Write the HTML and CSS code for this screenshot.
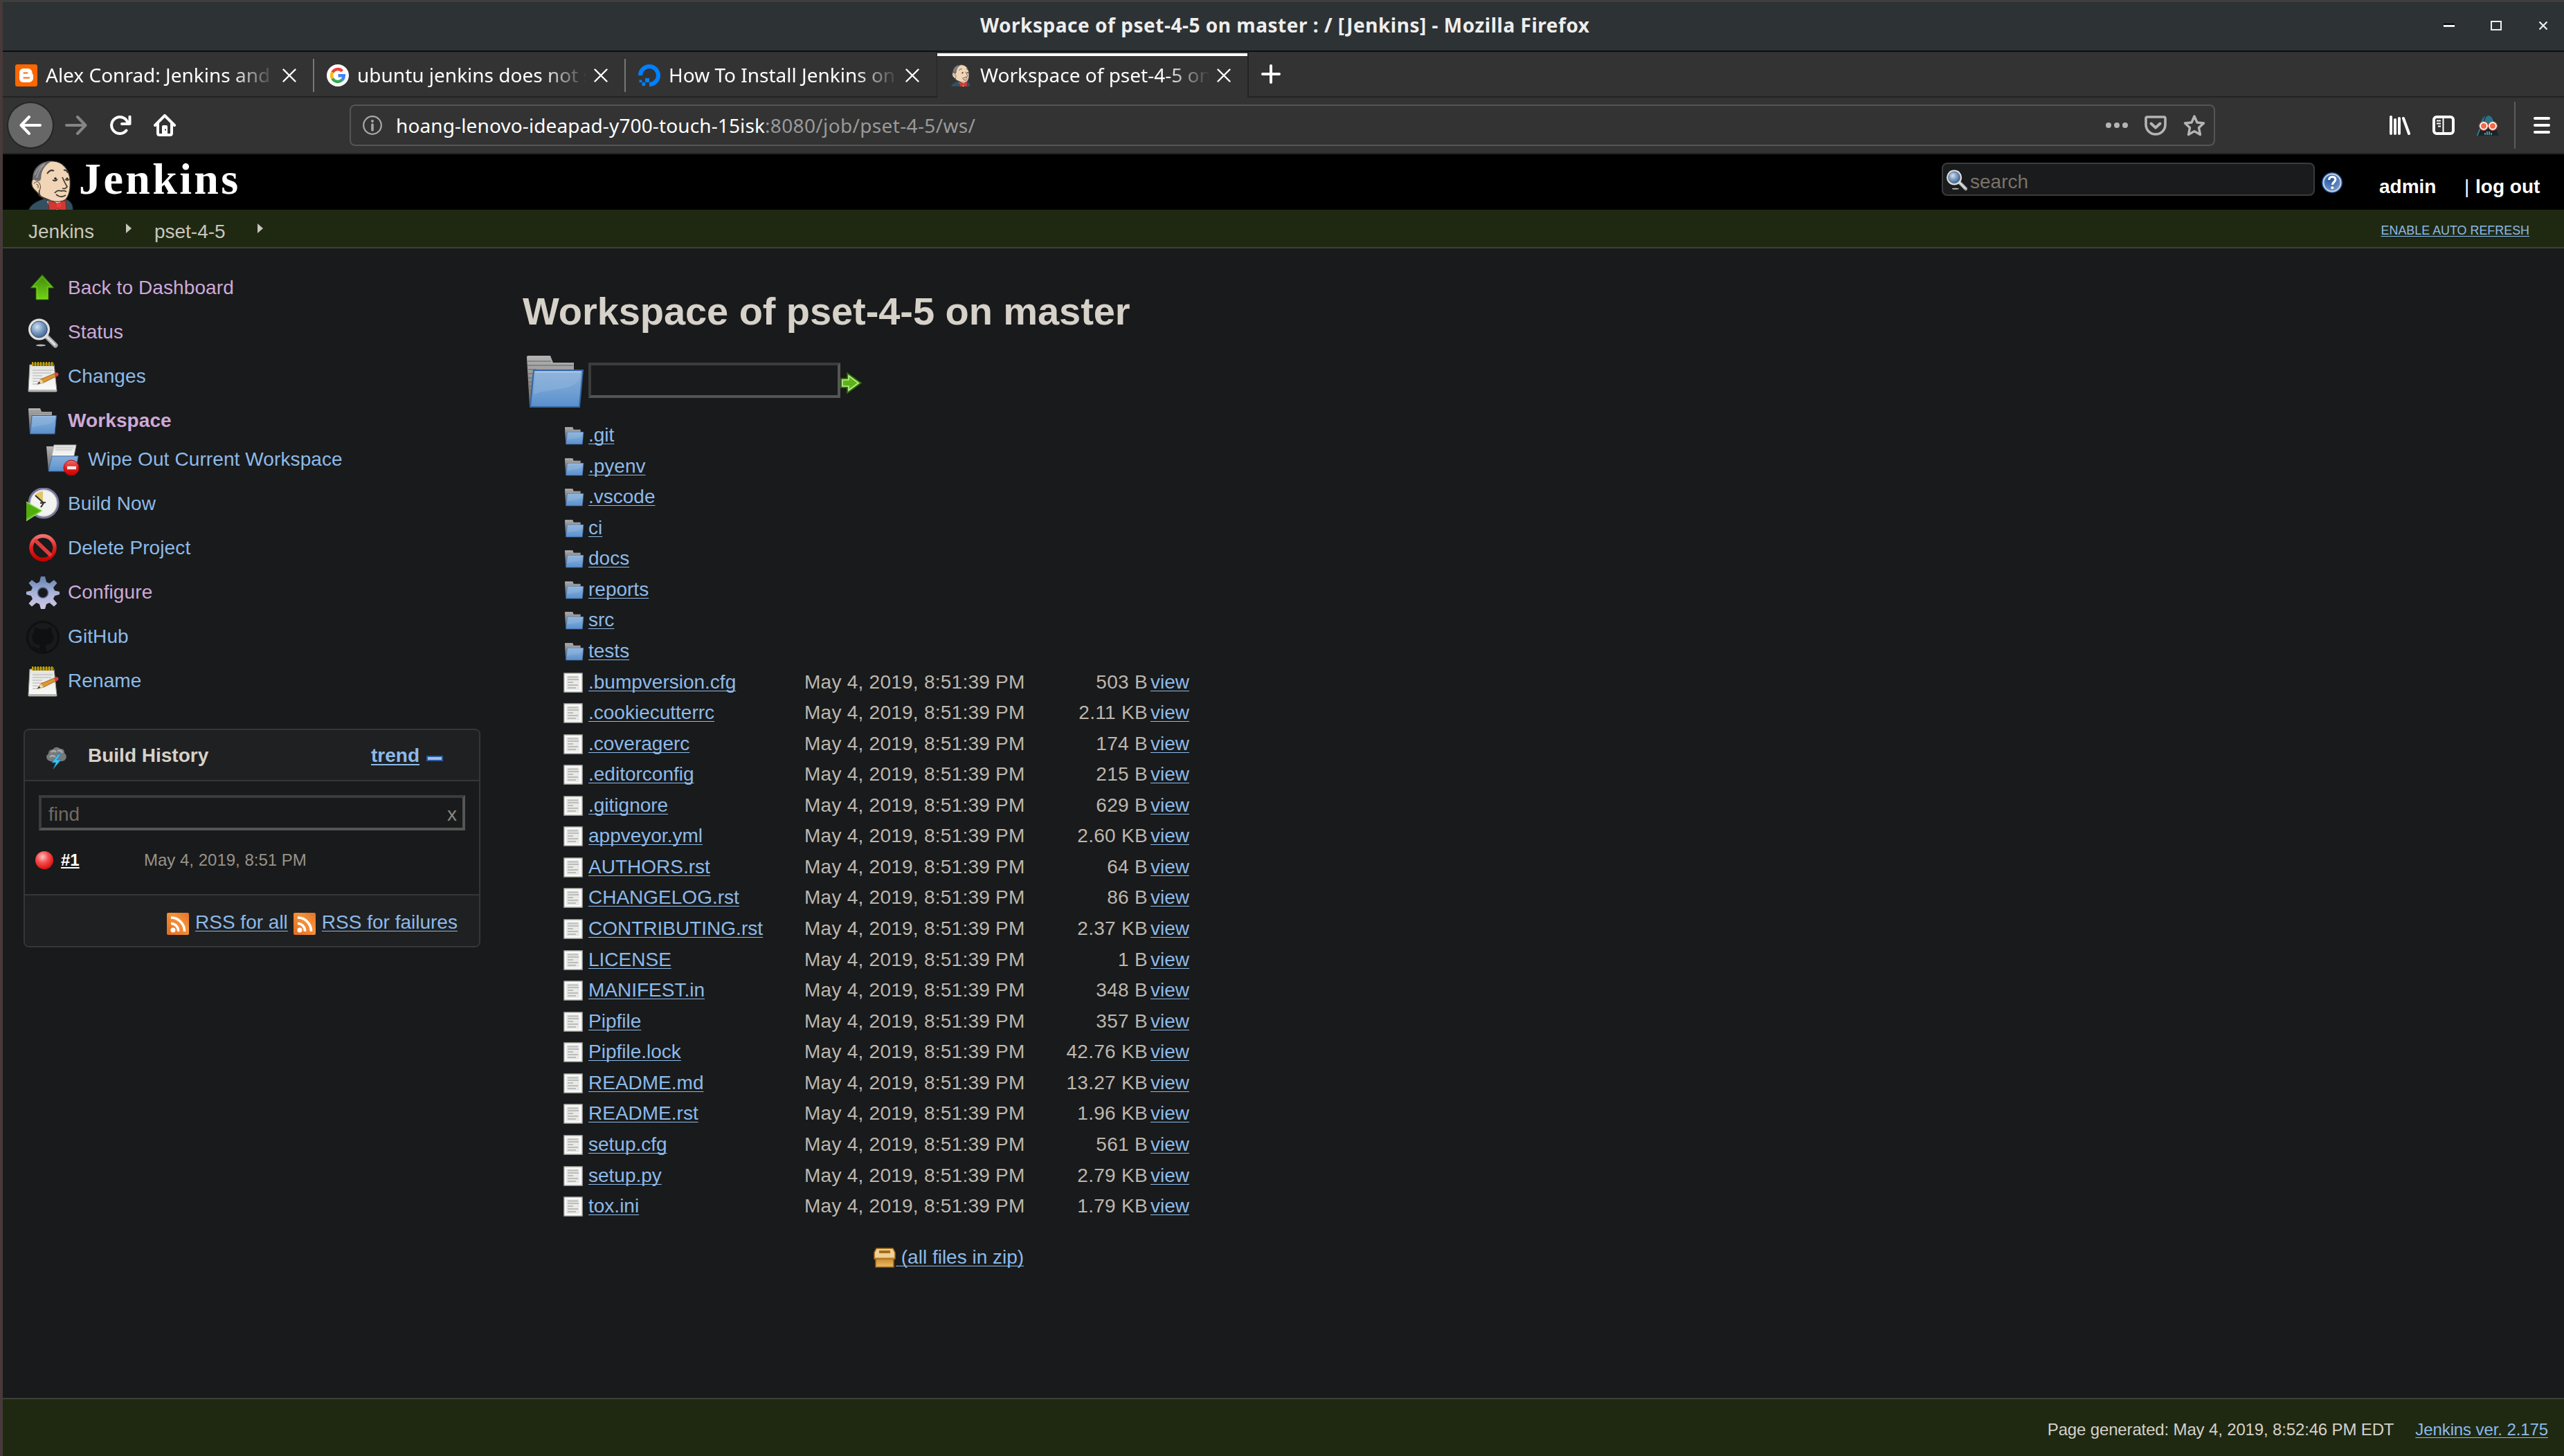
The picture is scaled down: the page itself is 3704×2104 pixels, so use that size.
FILE: index.html
```html
<!DOCTYPE html>
<html lang="en">
<head>
<meta charset="utf-8">
<title>Workspace of pset-4-5 on master : / [Jenkins]</title>
<link rel="stylesheet" href="styles.css">
</head>
<body>
<svg class="defs" width="0" height="0" aria-hidden="true">
  <defs>
    <linearGradient id="gBlue" x1="0" y1="0" x2="0" y2="1"><stop offset="0" stop-color="#88aed8"/><stop offset=".6" stop-color="#6f9fd3"/><stop offset="1" stop-color="#5a8fcc"/></linearGradient>
    <linearGradient id="gGray" x1="0" y1="0" x2="0" y2="1"><stop offset="0" stop-color="#b4b4b4"/><stop offset="1" stop-color="#666"/></linearGradient>
    <linearGradient id="gGreen" x1="0" y1="0" x2="0" y2="1"><stop offset="0" stop-color="#3f8a0c"/><stop offset="1" stop-color="#73d216"/></linearGradient>
    <linearGradient id="gRed" x1="0" y1="0" x2="0" y2="1"><stop offset="0" stop-color="#f07070"/><stop offset=".5" stop-color="#e02020"/><stop offset="1" stop-color="#c80000"/></linearGradient>
    <linearGradient id="gGear" x1="0" y1="0" x2="0" y2="1"><stop offset="0" stop-color="#5f7fb0"/><stop offset=".5" stop-color="#a9b3d8"/><stop offset="1" stop-color="#cfc6e4"/></linearGradient>
    <linearGradient id="gRss" x1="0" y1="1" x2="1" y2="0"><stop offset="0" stop-color="#e06a20"/><stop offset=".6" stop-color="#f59338"/><stop offset="1" stop-color="#e2702a"/></linearGradient>
    <linearGradient id="gBox" x1="0" y1="0" x2="0" y2="1"><stop offset="0" stop-color="#c98b2e"/><stop offset="1" stop-color="#edbd6c"/></linearGradient>
    <linearGradient id="gPaper" x1="0" y1="0" x2="0" y2="1"><stop offset="0" stop-color="#e2e2e0"/><stop offset="1" stop-color="#fbfbfb"/></linearGradient>
    <radialGradient id="gBall" cx=".4" cy=".32" r=".65"><stop offset="0" stop-color="#ffc4c4"/><stop offset=".5" stop-color="#f45050"/><stop offset="1" stop-color="#e01515"/></radialGradient>
    <radialGradient id="gLens" cx=".38" cy=".35" r=".7"><stop offset="0" stop-color="#d5e2f0"/><stop offset=".5" stop-color="#7c9dc4"/><stop offset="1" stop-color="#3d5f8d"/></radialGradient>
    <radialGradient id="gHelp" cx=".4" cy=".3" r=".8"><stop offset="0" stop-color="#23579c"/><stop offset="1" stop-color="#7f9fcb"/></radialGradient>

    <symbol id="folder" viewBox="0 0 48 48">
      <path d="M3 6q0-1 1-1h16l2 5h15v6H10L6 42q-1 0-1-1z" fill="url(#gGray)"/>
      <path d="M3.500 9h17M3.500 12h33M4 15h6M4 18h5M4 21h5M4 24h4M4 27h4M5 30h3M5 33h3M5 36h2" stroke="#6d6d6d" stroke-width="1" opacity=".6"/>
      <path d="M8 15.500h35.500L41 42H5.500z" fill="url(#gBlue)" stroke="#3465a4" stroke-width="1"/>
      <path d="M9 16.800h33L41.500 20C40 28 28 29 20 30q-8 1-12 3z" fill="#a4c4e6" opacity=".28"/>
      <path d="M9 16.800h33" stroke="#a9c7e8" stroke-width="1"/>
    </symbol>
    <symbol id="file" viewBox="0 0 32 32">
      <rect x="0" y="1" width="28" height="29" rx="1" fill="#8e8e8a"/>
      <rect x="1.500" y="2.500" width="25" height="26" fill="#fbfbfb"/>
      <rect x="4" y="5" width="19" height="21" fill="#e9e9e8"/>
      <path d="M6 7.500h15M6 11h16M6 15h8M6 19h15M6 23h12" stroke="#bcbcba" stroke-width="2"/>
    </symbol>
    <symbol id="notepad" viewBox="0 0 48 48">
      <path d="M5 6h35l4 38q0 1-1 1H4q-1 0-1-1z" fill="url(#gPaper)" stroke="#9a9a96" stroke-width="1"/>
      <path d="M3.500 42h40.500v3H3.500z" fill="#b5b5b2"/>
      <path d="M8 3h32v5H8z" fill="#6e6212"/>
      <path d="M9 2v6M13 2v6M17 2v6M21 2v6M25 2v6M29 2v6M33 2v6M37 2v6" stroke="#c4a000" stroke-width="2"/>
      <path d="M9 14h29M9 18h27M9 22h14M9 26h18M9 30h8M9 34h10" stroke="#c3c3c1" stroke-width="1.600"/>
      <path d="M16 34l5-7 19-8 3 4-18 9z" fill="#d9973a" stroke="#8f5902" stroke-width=".8"/>
      <path d="M16 34l5-7 4 5z" fill="#ecd9b4"/><path d="M16 34l2.500-3.500 2 2.300z" fill="#333"/>
      <path d="M40 18.500q4-2.500 6 0t-2.500 5z" fill="#e04040"/>
    </symbol>
    <symbol id="magnifier" viewBox="0 0 48 48">
      <ellipse cx="21" cy="42" rx="7" ry="1.500" fill="#ddd" opacity=".8"/>
      <path d="M30 30l12 12" stroke="#a9aaa7" stroke-width="7" stroke-linecap="round"/>
      <path d="M30 30l11 11" stroke="#e4e4e2" stroke-width="2.500" stroke-linecap="round"/>
      <circle cx="18.500" cy="19" r="15.500" fill="#dedfdc"/>
      <circle cx="18.500" cy="19" r="11.800" fill="url(#gLens)" stroke="#3a4f70" stroke-width="1"/>
    </symbol>
    <symbol id="rss" viewBox="0 0 32 32">
      <rect width="32" height="32" rx="2" fill="url(#gRss)"/>
      <circle cx="9" cy="25" r="3.500" fill="#fff"/>
      <path d="M6 15.500a10.500 10.500 0 0 1 10.500 11.500M6 7a19.500 19.500 0 0 1 19.500 20" fill="none" stroke="#fff" stroke-width="3.600"/>
    </symbol>
    <symbol id="butler" viewBox="0 0 66 74">
      <path d="M0 74c3-10 12-14 24-18l28 0c8 3 13 7 12 18z" fill="#335061" stroke="#1d3744" stroke-width="1"/>
      <path d="M27 60l14-3 10 0-1 17H33z" fill="#f4f4f4"/>
      <path d="M16 52C13 44 6 44 5 36s2-7 3-11C10 9 22 1 36 2c14 1 23 12 24 27 1 13-1 22-6 28-5 4-15 4-21 2z" fill="#f0d6b7" stroke="#3f3a36" stroke-width="1.200"/>
      <path d="M6 28C6 12 17 2 33 2 24 8 21 13 19 20c-1 4 0 7-2 10-5 2-8-1-11-2z" fill="#6d6b6d"/>
      <path d="M9 22c3-7 8-13 15-17M12 26c2-8 5-14 11-19" stroke="#969498" stroke-width="2" fill="none"/>
      <path d="M8 34q5-5 8 0t0 10M11 35q4 0 3 6" fill="none" stroke="#6b5544" stroke-width="1.200"/>
      <path d="M27 20q5-7 10-4M51 15q4-1 6 4" fill="none" stroke="#3f3a36" stroke-width="2"/>
      <path d="M35 29q4 3 7-1M53 28q3 3 6 0" fill="none" stroke="#2d2926" stroke-width="1.600"/>
      <circle cx="39" cy="27" r="1.800" fill="#222"/><circle cx="56" cy="27" r="1.600" fill="#222"/>
      <path d="M49 25q3 7 7 14-3 4-7 2M38 48q4-5 9-3 5-1 8 1M40 50q7 6 14 1M16 44q-3 10 13 14" fill="none" stroke="#4a3c33" stroke-width="1.800"/>
      <path d="M29 60q9-1 14 5 5-7 11-6l1 15H44l-2-4-5 4H30z" fill="#d33833" stroke="#81201d" stroke-width="1"/>
      <circle cx="44" cy="65" r="3.500" fill="#ef3d3a"/>
    </symbol>
    <symbol id="close" viewBox="0 0 20 20"><path d="M1.500 1.500l17 17M18.500 1.500l-17 17" stroke="#fff" stroke-width="2.400" stroke-linecap="round"/></symbol>
  </defs>
</svg>

<div class="window">
  <header class="titlebar">
    <span></span>
    <span class="title">Workspace of pset-4-5 on master : / [Jenkins] - Mozilla Firefox</span>
    <span class="controls">
      <svg width="16" height="16"><path d="M0 6h16" stroke="#000" stroke-width="2"/><path d="M0 8.500h16" stroke="#eee" stroke-width="3"/></svg>
      <svg width="16" height="16"><path d="M1 2h14v12H1z" fill="none" stroke="#eee" stroke-width="2"/><path d="M0 1h16v2H0z" fill="#eee"/></svg>
      <svg width="16" height="16"><path d="M2.500 2.500l11 11M13.500 2.500l-11 11" stroke="#eee" stroke-width="2.200"/></svg>
    </span>
  </header>

  <div class="tabs">
    <div class="tab">
      <svg class="fav" viewBox="0 0 32 32"><rect width="32" height="32" rx="3" fill="#ff6600"/><path d="M12 6h6c4 0 6.500 3 6.500 6 0 2 .5 2.500 1.500 2.500v5c0 4-3 6.500-6.500 6.500h-8C8 26 6 23 6 20v-8c0-3.500 2.500-6 6-6z" fill="#fff"/><path d="M12.500 12.500h5M12.500 19.500h7.500" stroke="#ff6600" stroke-width="2.200" stroke-linecap="round"/></svg>
      <span class="label">Alex Conrad: Jenkins and</span><svg class="x"><use href="#close"/></svg>
    </div>
    <div class="tab">
      <svg class="fav" viewBox="0 0 32 32"><circle cx="16" cy="16" r="16" fill="#fff"/><g fill="none" stroke-width="4.400"><path d="M8.300 11.500A9 9 0 0 1 22.500 9.800" stroke="#ea4335"/><path d="M8.300 20.500a9 9 0 0 1 0-9" stroke="#fbbc05"/><path d="M22 22.700a9 9 0 0 1-13.700-2.200" stroke="#34a853"/><path d="M16.500 16.300h8.300a9 9 0 0 1-2.800 6.400" stroke="#4285f4"/></g></svg>
      <span class="label">ubuntu jenkins does not s</span><svg class="x"><use href="#close"/></svg>
    </div>
    <div class="tab last">
      <svg class="fav" viewBox="0 0 32 32"><path d="M3 16A13 13 0 1 1 16 29" fill="none" stroke="#0080ff" stroke-width="6"/><path d="M10 20h6v6h-6zM5.500 26h4.500v5H5.500zM1.500 22.500h4V26h-4z" fill="#0080ff"/></svg>
      <span class="label">How To Install Jenkins on</span><svg class="x"><use href="#close"/></svg>
    </div>
    <div class="tab active">
      <svg class="fav"><use href="#butler"/></svg>
      <span class="label">Workspace of pset-4-5 on</span><svg class="x"><use href="#close"/></svg>
    </div>
    <div class="tabrest"><svg width="28" height="28"><path d="M14 2v24M2 14h24" stroke="#fff" stroke-width="4" stroke-linecap="round"/></svg></div>
  </div>

  <div class="navbar">
    <span class="back"><svg width="32" height="28" viewBox="0 0 32 28"><path d="M30 14H3M14 2L2.500 14 14 26" fill="none" stroke="#fff" stroke-width="4" stroke-linecap="round" stroke-linejoin="round"/></svg></span>
    <svg class="fwd" width="32" height="28" viewBox="0 0 32 28"><path d="M2 14h27M18 2l11.500 12L18 26" fill="none" stroke="#858585" stroke-width="4" stroke-linecap="round" stroke-linejoin="round"/></svg>
    <svg class="reload" width="32" height="28" viewBox="0 0 32 28"><path d="M23.500 21.500A12 12 0 1 1 25 9" fill="none" stroke="#fff" stroke-width="4" stroke-linecap="round"/><path d="M28.500 1.500V12H17" fill="none" stroke="#fff" stroke-width="4" stroke-linecap="round" stroke-linejoin="round"/><path d="M22 12l7-7v7z" fill="#fff"/></svg>
    <svg class="home" width="32" height="32" viewBox="0 0 32 32"><path d="M2 16L16 2l14 14M6 14v13.500q0 2.500 2.500 2.500h15q2.500 0 2.500-2.500V14" fill="none" stroke="#fff" stroke-width="4" stroke-linecap="round" stroke-linejoin="round"/><path d="M12 30V18q0-2 2-2h4q2 0 2 2v12z" fill="#fff"/><path d="M16 21.500h2v2h-2z" fill="#333"/></svg>
    <div class="urlbar">
      <svg width="28" height="28" viewBox="0 0 28 28"><circle cx="14" cy="14" r="12.800" fill="none" stroke="#a8a8a8" stroke-width="2.200"/><circle cx="14" cy="8" r="2" fill="#a8a8a8"/><path d="M14 13v8" stroke="#a8a8a8" stroke-width="3.600" stroke-linecap="round"/></svg>
      <span class="url"><span class="host">hoang-lenovo-ideapad-y700-touch-15isk</span><span class="path">:8080/job/pset-4-5/ws/</span></span>
      <svg width="32" height="32" viewBox="0 0 32 32"><g fill="#b4b4b4"><circle cx="4" cy="16" r="4"/><circle cx="16" cy="16" r="4"/><circle cx="28" cy="16" r="4"/></g></svg>
      <svg class="pocket" width="32" height="32" viewBox="0 0 32 32"><path d="M4 4h24q2 0 2 2v9a14 14 0 0 1-28 0V6q0-2 2-2z" fill="none" stroke="#b4b4b4" stroke-width="3.600"/><path d="M9.500 13.500l6.500 6 6.500-6" fill="none" stroke="#b4b4b4" stroke-width="4" stroke-linecap="round" stroke-linejoin="round"/></svg>
      <svg width="32" height="32" viewBox="0 0 32 32"><path d="M16 3l4 9 9.500 1-7 6.600 2 9.900L16 24.600 7.500 29.500l2-9.900-7-6.600 9.500-1z" fill="none" stroke="#b4b4b4" stroke-width="3.400" stroke-linejoin="round"/></svg>
    </div>
    <svg class="lib" width="32" height="28" viewBox="0 0 32 28"><path d="M3 2v24M9 6v20M15 4v22M21 4l8 22" stroke="#fff" stroke-width="4" stroke-linecap="round"/></svg>
    <svg class="side" width="32" height="28" viewBox="0 0 32 28"><rect x="2" y="2" width="28" height="24" rx="4" fill="none" stroke="#fff" stroke-width="4"/><path d="M15.500 2v24" stroke="#fff" stroke-width="2"/><path d="M6 7.500h6M6 11.500h6M8 15.500h4" stroke="#fff" stroke-width="2"/></svg>
    <svg class="ext" width="32" height="30" viewBox="0 0 32 30"><path d="M6 20C5 6 12 1 17 1s11 6 10 18l5 11H0z" fill="#14262d"/><path d="M5 18C6 6 10 2 13 1c-3 5-3 10-3 14zM11 13C11 6 13 1 17 1s8 5 8 13z" fill="#2b7384"/><path d="M4 20L0 30h1.500L5 21z" fill="#2f9aaa"/><g fill="#f4694a" stroke="#fff" stroke-width="2"><circle cx="10" cy="16" r="5"/><circle cx="23" cy="16" r="5"/></g><path d="M15 15.500h3" stroke="#fff" stroke-width="2"/><g fill="none" stroke="#d8502f" stroke-width="1"><circle cx="10" cy="16" r="6.500"/><circle cx="23" cy="16" r="6.500"/></g><path d="M12 26v3M15 24v5M18 24v5M21 26v3" stroke="#7fb4be" stroke-width="1.400"/></svg>
    <i class="vsep"></i>
    <svg width="24" height="24" viewBox="0 0 24 24"><path d="M2 2h20M2 12h20M2 22h20" stroke="#fff" stroke-width="4" stroke-linecap="round"/></svg>
  </div>

  <div class="page">
    <div class="header">
      <svg class="logo" width="66" height="72" viewBox="0 0 66 72"><use href="#butler" width="66" height="74"/></svg>
      <span class="brand">Jenkins</span>
      <div class="search"><svg width="34" height="34"><use href="#magnifier"/></svg><span>search</span></div>
      <svg class="help" width="32" height="32" viewBox="0 0 32 32"><circle cx="16" cy="16" r="15" fill="#27569a"/><circle cx="16" cy="16" r="12.500" fill="url(#gHelp)" stroke="#c9d6ea" stroke-width="2"/><path d="M11.500 12q.5-4.500 4.800-4.500t4.500 4c0 3.500-4.300 3.500-4.300 7.500" fill="none" stroke="#fff" stroke-width="3.200"/><circle cx="16.400" cy="23.300" r="2" fill="#fff"/></svg>
      <span class="user">admin</span>
      <span class="logout"><i>|</i> <b>log out</b></span>
    </div>
    <div class="crumbs">
      <span>Jenkins</span><i class="tri"></i><span>pset-4-5</span><i class="tri"></i>
      <a class="refresh">ENABLE AUTO REFRESH</a>
    </div>

    <div class="body">
      <aside class="side-panel">
        <div class="task v"><svg viewBox="0 0 48 48"><path d="M23 4L40 23h-8v17H14V23H6z" fill="url(#gGreen)" stroke="#2f6a05" stroke-width="1"/><path d="M23 7L36.500 21.500H30.500V38.500H15.500V21.500H9.500z" fill="none" stroke="#8be234" stroke-width="1" opacity=".6"/></svg><span>Back to Dashboard</span></div>
        <div class="task v"><svg><use href="#magnifier"/></svg><span>Status</span></div>
        <div class="task"><svg><use href="#notepad"/></svg><span>Changes</span></div>
        <div class="task v cur"><svg><use href="#folder"/></svg><span>Workspace</span></div>
        <div class="task sub"><svg viewBox="0 0 48 48"><path d="M1 4h12v6L7 40H4z" fill="url(#gGray)"/><path d="M12 2h32l-4 20H8z" fill="url(#gPaper)" stroke="#aaa"/><path d="M14 6h26M14 9h24" stroke="#bbb" stroke-width="1.200"/><path d="M9 18h38L43 40H4z" fill="url(#gBlue)" stroke="#3f6fae"/><circle cx="37" cy="35" r="11" fill="url(#gRed)" stroke="#b00808"/><path d="M31 35h13" stroke="#f4e8e8" stroke-width="4.500"/></svg><span>Wipe Out Current Workspace</span></div>
        <div class="task"><svg viewBox="0 0 48 48"><circle cx="25" cy="22" r="21" fill="#f2f2ee" stroke="#77779a" stroke-width="3"/><circle cx="25" cy="22" r="19" fill="none" stroke="#c9c9dc" stroke-width="1"/><path d="M24 22L12 11q5-6 12-6z" fill="#e0c56a"/><path d="M13 11l12 11-4 6M20 22l8-1" fill="none" stroke="#333" stroke-width="2.200"/><path d="M-2 19v30L23 33z" fill="#62c01c" stroke="#b6e58f" stroke-width="1"/><path d="M0 22v22L19 33z" fill="#4fae0c"/></svg><span>Build Now</span></div>
        <div class="task"><svg viewBox="0 0 48 48"><circle cx="24" cy="22.500" r="17" fill="none" stroke="url(#gRed)" stroke-width="5.500"/><path d="M12 11l24 23" stroke="#e23a3a" stroke-width="5.500"/></svg><span>Delete Project</span></div>
        <div class="task v"><svg viewBox="0 0 48 48"><g fill="url(#gGear)"><path d="M21 0h6l2 8 4.500 2L40 5l4.500 4.500L39 16l2 4.500 7 1.500v4l-7 2-2 4.500 5.500 6.500L40 43.500 33.500 38 29 40l-2 7h-6l-2-7-4.500-2L8 43.500 3.500 39 9 32.500 7 28l-7-2v-4l7-1.500L9 16 3.500 9.500 8 5l6.500 5L19 8z"/></g><circle cx="24" cy="23.500" r="7.500" fill="#191a1b" stroke="#56678e" stroke-width="1.500"/></svg><span>Configure</span></div>
        <div class="task"><svg viewBox="0 0 48 48"><circle cx="24" cy="24" r="22.500" fill="none" stroke="#0f1011" stroke-width="3"/><path d="M12 9l7 3h10l7-3 1 8q4 4 2 11-2 6-11 7l1 11h-10v-4q-8 2-10-6 5 1 6 4h4l1-5Q11 34 9 28q-2-7 2-11z" fill="#0f1011"/></svg><span>GitHub</span></div>
        <div class="task"><svg><use href="#notepad"/></svg><span>Rename</span></div>

        <section class="history">
          <div class="hist-head">
            <svg width="32" height="32" viewBox="0 0 32 32"><path d="M4 20q-6-5 0-10 0-6 6-6 5-6 11-1 6-1 6 6 6 6 0 11-5 2-11 1-7 2-12-1z" fill="#77797b"/><path d="M8 8q4-4 7 0M17 6q5-2 7 3M6 15q4-4 8 0" fill="none" stroke="#a9abad" stroke-width="2.400"/><path d="M18 11l-9 12h6l-4 9 11-13h-6l6-8z" fill="#3fc1ec" stroke="#1f7fae" stroke-width=".8"/></svg>
            <b>Build History</b>
            <a class="trend">trend</a>
            <i class="minus"></i>
          </div>
          <div class="hist-body">
            <div class="find"><span>find</span><span class="clr">x</span></div>
            <div class="build"><svg width="28" height="28" viewBox="0 0 28 28"><circle cx="14" cy="14" r="13" fill="url(#gBall)"/></svg><a>#1</a><span>May 4, 2019, 8:51 PM</span></div>
          </div>
          <div class="hist-foot">
            <svg width="32" height="32"><use href="#rss"/></svg><a>RSS for all</a>
            <svg class="second" width="32" height="32"><use href="#rss"/></svg><a>RSS for failures</a>
          </div>
        </section>
      </aside>

      <main>
        <h1>Workspace of pset-4-5 on master</h1>
        <div class="goto">
          <svg width="96" height="96"><use href="#folder"/></svg>
          <div class="field"></div>
          <svg class="go" width="32" height="32" viewBox="0 0 32 32"><path d="M1 9h9V1l20 14.500L10 30v-8H1z" fill="#5cb515" stroke="#2f6a05" stroke-width="1.600"/><path d="M3 11h9V5l14 10.500L12 26v-6H3z" fill="none" stroke="#bfe8a0" stroke-width="1.600"/></svg>
        </div>
        <div class="files">
          <div class="row"><svg><use href="#folder"/></svg><span><a>.git</a></span></div>
          <div class="row"><svg><use href="#folder"/></svg><span><a>.pyenv</a></span></div>
          <div class="row"><svg><use href="#folder"/></svg><span><a>.vscode</a></span></div>
          <div class="row"><svg><use href="#folder"/></svg><span><a>ci</a></span></div>
          <div class="row"><svg><use href="#folder"/></svg><span><a>docs</a></span></div>
          <div class="row"><svg><use href="#folder"/></svg><span><a>reports</a></span></div>
          <div class="row"><svg><use href="#folder"/></svg><span><a>src</a></span></div>
          <div class="row"><svg><use href="#folder"/></svg><span><a>tests</a></span></div>
          <div class="row"><svg><use href="#file"/></svg><span><a>.bumpversion.cfg</a></span><time>May 4, 2019, 8:51:39 PM</time><em>503 B</em><a>view</a></div>
          <div class="row"><svg><use href="#file"/></svg><span><a>.cookiecutterrc</a></span><time>May 4, 2019, 8:51:39 PM</time><em>2.11 KB</em><a>view</a></div>
          <div class="row"><svg><use href="#file"/></svg><span><a>.coveragerc</a></span><time>May 4, 2019, 8:51:39 PM</time><em>174 B</em><a>view</a></div>
          <div class="row"><svg><use href="#file"/></svg><span><a>.editorconfig</a></span><time>May 4, 2019, 8:51:39 PM</time><em>215 B</em><a>view</a></div>
          <div class="row"><svg><use href="#file"/></svg><span><a>.gitignore</a></span><time>May 4, 2019, 8:51:39 PM</time><em>629 B</em><a>view</a></div>
          <div class="row"><svg><use href="#file"/></svg><span><a>appveyor.yml</a></span><time>May 4, 2019, 8:51:39 PM</time><em>2.60 KB</em><a>view</a></div>
          <div class="row"><svg><use href="#file"/></svg><span><a>AUTHORS.rst</a></span><time>May 4, 2019, 8:51:39 PM</time><em>64 B</em><a>view</a></div>
          <div class="row"><svg><use href="#file"/></svg><span><a>CHANGELOG.rst</a></span><time>May 4, 2019, 8:51:39 PM</time><em>86 B</em><a>view</a></div>
          <div class="row"><svg><use href="#file"/></svg><span><a>CONTRIBUTING.rst</a></span><time>May 4, 2019, 8:51:39 PM</time><em>2.37 KB</em><a>view</a></div>
          <div class="row"><svg><use href="#file"/></svg><span><a>LICENSE</a></span><time>May 4, 2019, 8:51:39 PM</time><em>1 B</em><a>view</a></div>
          <div class="row"><svg><use href="#file"/></svg><span><a>MANIFEST.in</a></span><time>May 4, 2019, 8:51:39 PM</time><em>348 B</em><a>view</a></div>
          <div class="row"><svg><use href="#file"/></svg><span><a>Pipfile</a></span><time>May 4, 2019, 8:51:39 PM</time><em>357 B</em><a>view</a></div>
          <div class="row"><svg><use href="#file"/></svg><span><a>Pipfile.lock</a></span><time>May 4, 2019, 8:51:39 PM</time><em>42.76 KB</em><a>view</a></div>
          <div class="row"><svg><use href="#file"/></svg><span><a>README.md</a></span><time>May 4, 2019, 8:51:39 PM</time><em>13.27 KB</em><a>view</a></div>
          <div class="row"><svg><use href="#file"/></svg><span><a>README.rst</a></span><time>May 4, 2019, 8:51:39 PM</time><em>1.96 KB</em><a>view</a></div>
          <div class="row"><svg><use href="#file"/></svg><span><a>setup.cfg</a></span><time>May 4, 2019, 8:51:39 PM</time><em>561 B</em><a>view</a></div>
          <div class="row"><svg><use href="#file"/></svg><span><a>setup.py</a></span><time>May 4, 2019, 8:51:39 PM</time><em>2.79 KB</em><a>view</a></div>
          <div class="row"><svg><use href="#file"/></svg><span><a>tox.ini</a></span><time>May 4, 2019, 8:51:39 PM</time><em>1.79 KB</em><a>view</a></div>
        </div>
        <div class="zip"><svg width="32" height="32" viewBox="0 0 32 32"><path d="M4 2h24l3 6v9H1V8z" fill="#f0cf98" stroke="#9a6412" stroke-width="1.600"/><path d="M8 5h16v4H8z" fill="#a56f14"/><path d="M3 17h26v12H3z" fill="url(#gBox)" stroke="#9a6412" stroke-width="1.600"/><path d="M1 16.500h30" stroke="#b77b1e" stroke-width="2"/></svg><a>&nbsp;(all files in zip)</a></div>
      </main>
    </div>

    <footer><span>Page generated: May 4, 2019, 8:52:46 PM EDT</span><a>Jenkins ver. 2.175</a></footer>
  </div>
</div>
</body>
</html>
```
FILE: styles.css
```css
* { box-sizing: border-box; }
html, body { margin: 0; height: 2104px; background: #191a1b; }
body { font-family: "Liberation Sans", Arial, sans-serif; font-size: 28px; color: #bdb7ae; overflow: hidden; }
svg { display: block; flex: none; }
i, em { font-style: normal; }
.defs { position: absolute; }
a { color: #8cbaea; text-decoration: underline; text-decoration-thickness: 1px; text-underline-offset: 3px; text-decoration-skip-ink: none; white-space: pre; }

.window { width: 3704px; height: 2104px; display: flex; flex-direction: column; border-left: 4px solid #483a3a; border-top: 3px solid #3e3f3c; }

/* window title */
.titlebar { height: 72px; flex: none; display: grid; grid-template-columns: 1fr auto 1fr; background: #2d3235; border-bottom: 2px solid #0c0e0f; font: bold 28px/67px "Noto Sans", sans-serif; color: #eeeeec; }
.title { width: 884px; white-space: nowrap; letter-spacing: 0.52px; margin-left: 8px; }
.controls { display: flex; justify-content: flex-end; gap: 52px; padding: 26px 22px 0 0; }

/* tab strip */
.tabs { height: 66px; flex: none; display: flex; background: #333; color: #fff; font: 28px/56px "Noto Sans", sans-serif; }
.tab { width: 450px; display: flex; align-items: flex-start; padding: 18px 0 0 18px; border-bottom: 2px solid #232323; background: linear-gradient(#777, #777) 448px 10px / 2px 48px no-repeat; }
.tab.last { background: none; border-right: 1px solid #232323; }
.tab.active { border-bottom: 0; background: linear-gradient(#fff, #fff) 0 2px / 448px 4px no-repeat; border-right: 2px solid #232323; }
.tab .fav { width: 32px; height: 32px; }
.label { width: 330px; margin: -13px 0 0 12px; white-space: nowrap; overflow: hidden; -webkit-mask-image: linear-gradient(90deg, #000 268px, transparent 332px); mask-image: linear-gradient(90deg, #000 268px, transparent 332px); }
.tab .x { width: 20px; height: 20px; margin: 6px 0 0 12px; }
.tabrest { flex: 1; border-bottom: 2px solid #232323; padding: 18px 0 0 18px; }

/* navigation */
.navbar { height: 82px; flex: none; display: flex; align-items: center; background: #333; border-bottom: 2px solid #232323; }
.back { width: 64px; height: 64px; margin-left: 8px; border-radius: 50%; background: #676767; box-shadow: 0 0 0 2px #262626; display: flex; align-items: center; justify-content: center; }
.fwd { margin-left: 18px; }
.reload { margin-left: 33px; }
.home { margin-left: 31px; }
.urlbar { width: 2695px; height: 60px; margin-left: 251px; border: 2px solid #555; border-radius: 8px; display: flex; align-items: center; padding: 0 12px 0 17px; }
.url { flex: 1; margin-left: 20px; font: 28px/56px "Noto Sans", sans-serif; white-space: nowrap; }
.host { color: #fff; letter-spacing: 0.12px; }
.path { color: #9a9a9a; letter-spacing: 0.35px; }
.pocket { margin: 0 24px; }
.lib { margin-left: 251px; }
.side { margin-left: 31px; }
.ext { margin-left: 32px; }
.vsep { width: 2px; height: 68px; background: #5c5c5c; margin: 0 26px 0 22px; }

/* Jenkins header */
.page { flex: 1; display: flex; flex-direction: column; }
.header { height: 80px; flex: none; background: #000; display: flex; align-items: flex-start; color: #fff; overflow: hidden; }
.logo { margin: 8px 0 0 37px; }
.brand { width: 242px; margin-left: 7px; font: bold 64px/72px "Liberation Serif", serif; letter-spacing: 3.4px; white-space: nowrap; }
.search { width: 539px; height: 48px; margin: 12px 0 0 2449px; border: 2px solid #393b3d; border-radius: 8px; background: #1a1b1d; display: flex; padding: 6px 0 0 3px; color: #7a7368; }
.search span { margin-left: 2px; line-height: 44px; margin-top: -2px; }
.help { margin: 25px 0 0 9px; }
.user { width: 121px; margin: 30px 0 0 52px; font-weight: bold; line-height: 33px; }
.logout { margin-top: 30px; line-height: 33px; white-space: nowrap; padding-left: 2px; }
.logout b { margin-left: 1px; }
.crumbs { height: 56px; flex: none; background: #1f2912; border-bottom: 2px solid #3d4036; display: flex; align-items: flex-start; padding: 14px 50px 0 37px; line-height: 36px; color: #c9c5bd; }
.tri { border-left: 8px solid #c9c5bd; border-top: 7px solid transparent; border-bottom: 7px solid transparent; margin: 6px 33px 0 46px; }
.refresh { margin-left: auto; font-size: 17.9px; line-height: 32px; text-underline-offset: 2px; }

/* page body */
.body { flex: 1; display: flex; }
.side-panel { width: 751px; padding: 34px 0 0 34px; }
.task { display: flex; height: 64px; line-height: 46px; color: #8cbaea; }
.task svg { width: 48px; height: 48px; overflow: hidden; }
.task span { margin-left: 12px; letter-spacing: 0.1px; }
.task.v { color: #cda9d9; }
.task.cur { height: 56px; font-weight: bold; }
.task.sub { padding-left: 28px; }
.task.sub span { margin-left: 13px; }

.history { width: 660px; height: 316px; margin: 28px 0 0 -4px; border: 2px solid #34373a; border-radius: 8px; display: flex; flex-direction: column; overflow: hidden; }
.hist-head { height: 74px; background: #1f2021; border-bottom: 2px solid #34373a; display: flex; padding-left: 30px; line-height: 74px; }
.hist-head svg { margin-top: 24px; }
.hist-head b { width: 409px; margin-left: 29px; color: #d6d1c9; }
.trend { font-weight: bold; text-decoration-thickness: 2px; }
.minus { width: 24px; height: 8px; margin: 37px 0 0 10px; background: #a3bfe6; border: 2px solid #2d5a9c; }
.hist-body { height: 165px; padding: 20px 20px 0; border-bottom: 2px solid #34373a; }
.find { height: 51px; border: 4px solid; border-color: #3c3c3c #555 #555 #3c3c3c; display: flex; justify-content: space-between; padding: 0 8px 0 10px; line-height: 48px; color: #716b62; }
.find .clr { color: #8d877d; }
.build { display: flex; margin: 29px 0 0 -6px; font-size: 24px; line-height: 28px; color: #98938b; }
.build a { width: 27px; margin: 0 93px 0 10px; font-weight: bold; color: #fff; text-decoration-thickness: 2px; text-underline-offset: 2px; }
.hist-foot { flex: 1; background: #1f2021; display: flex; padding: 25px 0 0 205px; line-height: 28px; }
.hist-foot a { margin-left: 9px; line-height: 28px; }
.second { margin-left: 8px; }

/* workspace listing */
h1 { margin: 56px 0 0 0; font-size: 56px; line-height: 69px; letter-spacing: -0.07px; color: #d6d1c9; white-space: nowrap; }
.goto { display: flex; height: 109px; margin-top: 21px; }
.goto > svg:first-child { width: 96px; margin-top: -1px; }
.field { width: 364px; height: 51px; margin: 19px 0 0 -1px; border: 4px solid; border-color: #3c3c3c #555 #555 #3c3c3c; }
.goto .go { margin-top: 33px; }
.files { margin-left: 59px; display: grid; grid-auto-rows: 44.57px; }
.row { display: grid; grid-template-columns: 36px 312px 328px 168px auto; justify-content: start; align-items: start; line-height: 30px; }
.row svg { width: 32px; height: 32px; }
.row time { letter-spacing: 0.25px; white-space: nowrap; }
.row em { text-align: right; letter-spacing: 0.3px; white-space: nowrap; }
.row > a { margin-left: 4px; }
.zip { display: flex; margin: 29px 0 0 507px; line-height: 29px; }

footer { height: 84px; flex: none; background: #1f2912; border-top: 2px solid #3d4036; display: flex; justify-content: flex-end; padding: 30px 23px 0 0; font-size: 24px; line-height: 28px; color: #d6d1c9; }
footer span { letter-spacing: -0.15px; }
footer a { margin-left: 31px; letter-spacing: -0.1px; }
```
